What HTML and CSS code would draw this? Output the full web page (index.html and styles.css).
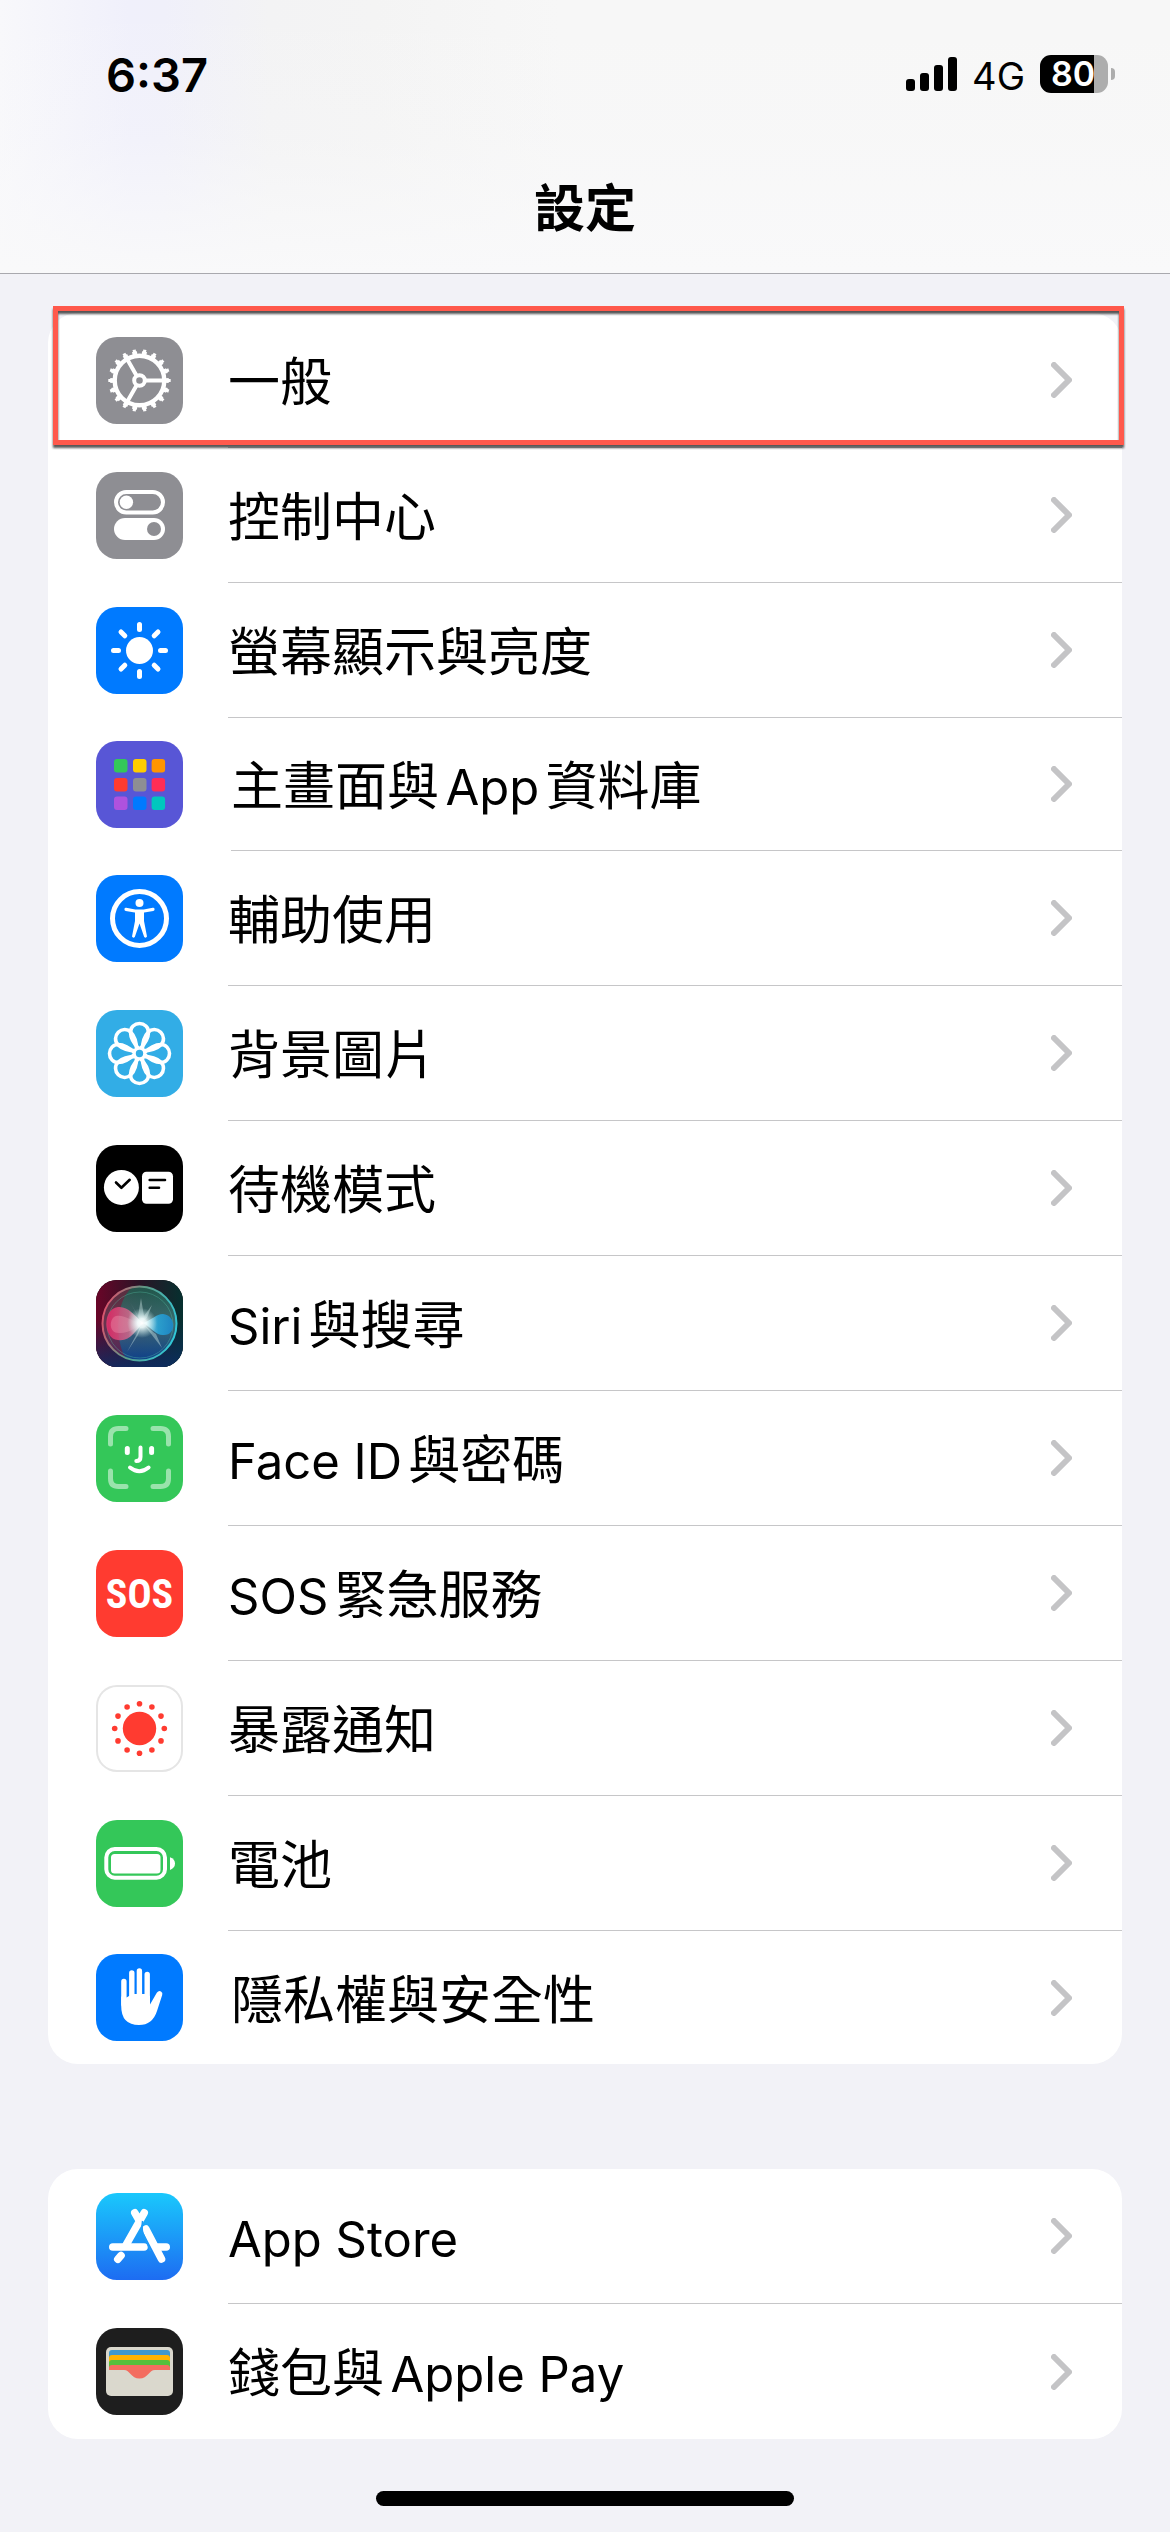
FILE: index.html
```html
<!DOCTYPE html>
<html lang="zh-Hant">

<head>
    <meta charset="UTF-8">
    <meta name="viewport" content="width=device-width, initial-scale=1">
    <title>設定</title>
    <link rel="stylesheet" href="styles.css">
</head>

<body>
    <!-- shared shapes -->
    <svg class="defs" width="0" height="0" aria-hidden="true">
        <symbol id="chevron" viewBox="0 0 21 36">
            <path d="M3 3L18 18L3 33" fill="none" stroke="#c4c4c6" stroke-width="6" stroke-linecap="round" stroke-linejoin="round"/>
        </symbol>
        <symbol id="petal" viewBox="-44 -44 88 88">
            <path d="M0 -4C-4 -8 -9 -15 -9 -21.5A9 8.5 0 0 1 9 -21.5C9 -15 4 -8 0 -4Z" fill="none" stroke="#fff" stroke-width="3.6"/>
        </symbol>
    </svg>

    <header class="top">
        <div class="status">
            <span class="time">6:37</span>
            <div class="status-right">
                <svg class="signal" viewBox="0 0 51 34" aria-hidden="true">
                    <rect x="0" y="22" width="9" height="12" rx="3"/>
                    <rect x="14" y="16" width="9" height="18" rx="3"/>
                    <rect x="28" y="8" width="9" height="26" rx="3"/>
                    <rect x="42" y="0" width="9" height="34" rx="3"/>
                </svg>
                <span class="network">4G</span>
                <div class="battery">
                    <span class="battery-level">80</span>
                </div>
            </div>
        </div>
        <h1>設定</h1>
    </header>

    <main>
        <ul class="card">
            <li>
                <a class="row" href="#general">
                    <svg class="icon gray" viewBox="0 0 87 87" aria-hidden="true">
                        <g fill="none" stroke="#fff">
                            <circle cx="43.5" cy="43.5" r="24.8" stroke-width="4.4"/>
                            <circle cx="43.5" cy="43.5" r="27.6" stroke-width="3.4" pathLength="180" stroke-dasharray="5 5" stroke-dashoffset="2.5"/>
                            <circle cx="43.5" cy="43.5" r="29.8" stroke-width="2.8" pathLength="180" stroke-dasharray="3 7" stroke-dashoffset="1.5"/>
                            <circle cx="43.5" cy="43.5" r="5.3" stroke-width="4"/>
                            <path d="M50 43.5H67M40.2 37.9L31.5 22.7M40.2 49.1L31.5 64.3" stroke-width="4"/>
                        </g>
                    </svg>
                    <div class="row-body"><span class="label">一般</span><svg class="chevron" aria-hidden="true"><use href="#chevron"/></svg></div>
                </a>
                <div class="highlight"></div>
            </li>
            <li>
                <a class="row" href="#control-center">
                    <svg class="icon gray" viewBox="0 0 87 87" aria-hidden="true">
                        <rect x="20" y="20" width="47" height="20.5" rx="10.2" fill="none" stroke="#fff" stroke-width="4"/>
                        <circle cx="30.4" cy="30.2" r="6.7" fill="#fff"/>
                        <rect x="18" y="46" width="51" height="22" rx="11" fill="#fff"/>
                        <circle cx="58" cy="57" r="7" fill="#8e8e93"/>
                    </svg>
                    <div class="row-body"><span class="label">控制中心</span><svg class="chevron" aria-hidden="true"><use href="#chevron"/></svg></div>
                </a>
            </li>
            <li>
                <a class="row" href="#display">
                    <svg class="icon blue" viewBox="0 0 87 87" aria-hidden="true">
                        <circle cx="43.5" cy="43.5" r="13.5" fill="#fff"/>
                        <path d="M43.5 17.5V22.5M43.5 64.5V69.5M17.5 43.5H22.5M64.5 43.5H69.5M25 25L28.8 28.8M58.2 58.2L62 62M25 62L28.8 58.2M58.2 28.8L62 25" stroke="#fff" stroke-width="5" stroke-linecap="round"/>
                    </svg>
                    <div class="row-body"><span class="label">螢幕顯示與亮度</span><svg class="chevron" aria-hidden="true"><use href="#chevron"/></svg></div>
                </a>
            </li>
            <li>
                <a class="row tight" href="#home-screen">
                    <svg class="icon indigo" viewBox="0 0 87 87" aria-hidden="true">
                        <rect x="18" y="18" width="13.5" height="13.5" rx="3" fill="#34c759"/>
                        <rect x="37" y="18" width="13.5" height="13.5" rx="3" fill="#ffcc00"/>
                        <rect x="55.6" y="18" width="13.5" height="13.5" rx="3" fill="#ff9500"/>
                        <rect x="18" y="37" width="13.5" height="13.5" rx="3" fill="#ff3b30"/>
                        <rect x="37" y="37" width="13.5" height="13.5" rx="3" fill="#8e8e93"/>
                        <rect x="55.6" y="37" width="13.5" height="13.5" rx="3" fill="#ff2d55"/>
                        <rect x="18" y="55.6" width="13.5" height="13.5" rx="3" fill="#af52de"/>
                        <rect x="37" y="55.6" width="13.5" height="13.5" rx="3" fill="#007aff"/>
                        <rect x="55.6" y="55.6" width="13.5" height="13.5" rx="3" fill="#00c7be"/>
                    </svg>
                    <div class="row-body"><span class="label">主畫面與<span class="latin">App</span>資料庫</span><svg class="chevron" aria-hidden="true"><use href="#chevron"/></svg></div>
                </a>
            </li>
            <li>
                <a class="row" href="#accessibility">
                    <svg class="icon blue" viewBox="0 0 87 87" aria-hidden="true">
                        <circle cx="43.5" cy="43.5" r="27" fill="none" stroke="#fff" stroke-width="5"/>
                        <circle cx="43.5" cy="28" r="4" fill="#fff"/>
                        <path d="M30 34.4L39 36H48L57 34.4" fill="none" stroke="#fff" stroke-width="3.2" stroke-linecap="round" stroke-linejoin="round"/>
                        <path d="M39 35H48V46L51 61.5Q50 63.5 48.2 62L43.5 48.5L38.8 62Q37 63.5 36 61.5L39 46Z" fill="#fff"/>
                    </svg>
                    <div class="row-body"><span class="label">輔助使用</span><svg class="chevron" aria-hidden="true"><use href="#chevron"/></svg></div>
                </a>
            </li>
            <li>
                <a class="row" href="#wallpaper">
                    <svg class="icon cyan" viewBox="-43.5 -43.5 87 87" aria-hidden="true">
                        <g>
                            <use href="#petal" x="-44" y="-44" width="88" height="88"/>
                            <use href="#petal" x="-44" y="-44" width="88" height="88" transform="rotate(45)"/>
                            <use href="#petal" x="-44" y="-44" width="88" height="88" transform="rotate(90)"/>
                            <use href="#petal" x="-44" y="-44" width="88" height="88" transform="rotate(135)"/>
                            <use href="#petal" x="-44" y="-44" width="88" height="88" transform="rotate(180)"/>
                            <use href="#petal" x="-44" y="-44" width="88" height="88" transform="rotate(225)"/>
                            <use href="#petal" x="-44" y="-44" width="88" height="88" transform="rotate(270)"/>
                            <use href="#petal" x="-44" y="-44" width="88" height="88" transform="rotate(315)"/>
                        </g>
                        <circle r="5.2" fill="#32ade6" stroke="#fff" stroke-width="3"/>
                    </svg>
                    <div class="row-body"><span class="label">背景圖片</span><svg class="chevron" aria-hidden="true"><use href="#chevron"/></svg></div>
                </a>
            </li>
            <li>
                <a class="row" href="#standby">
                    <svg class="icon black" viewBox="0 0 87 87" aria-hidden="true">
                        <circle cx="25.4" cy="42.4" r="17.5" fill="#fff"/>
                        <rect x="46" y="26.7" width="31" height="32" rx="4.5" fill="#fff"/>
                        <path d="M20 37.5L25.4 42.8L33.7 34.8M53.7 35H69M53.7 42.7H63" fill="none" stroke="#000" stroke-width="2.6" stroke-linecap="round" stroke-linejoin="round"/>
                    </svg>
                    <div class="row-body"><span class="label">待機模式</span><svg class="chevron" aria-hidden="true"><use href="#chevron"/></svg></div>
                </a>
            </li>
            <li>
                <a class="row" href="#siri">
                    <svg class="icon black" viewBox="0 0 87 87" aria-hidden="true">
                        <defs>
                            <linearGradient id="siriLeft" x1="0" y1="0" x2="1" y2="0">
                                <stop offset="0" stop-color="#6a0528"/>
                                <stop offset=".5" stop-color="#2a1426"/>
                                <stop offset="1" stop-color="#06302f"/>
                            </linearGradient>
                            <linearGradient id="siriFloor" x1="0" y1="0" x2="0" y2="1">
                                <stop offset=".45" stop-color="#0b2d5e" stop-opacity="0"/>
                                <stop offset="1" stop-color="#0b2d66" stop-opacity=".85"/>
                            </linearGradient>
                            <linearGradient id="siriRing" x1="0" y1=".3" x2="1" y2=".6">
                                <stop offset="0" stop-color="#e0506c"/>
                                <stop offset=".45" stop-color="#5c9a86"/>
                                <stop offset="1" stop-color="#30c8d8"/>
                            </linearGradient>
                            <linearGradient id="siriBall" x1="0" y1="0" x2="0" y2="1">
                                <stop offset="0" stop-color="#1f6a55"/>
                                <stop offset=".5" stop-color="#4b7f86"/>
                                <stop offset="1" stop-color="#0d4a9c"/>
                            </linearGradient>
                            <linearGradient id="siriPink" x1="0" y1="0" x2="1" y2="0">
                                <stop offset="0" stop-color="#f0286a"/>
                                <stop offset=".6" stop-color="#d8688c"/>
                                <stop offset="1" stop-color="#fff"/>
                            </linearGradient>
                            <linearGradient id="siriBlue" x1="0" y1="0" x2="1" y2="0">
                                <stop offset="0" stop-color="#d8fbff"/>
                                <stop offset=".5" stop-color="#28a8dc"/>
                                <stop offset="1" stop-color="#1a8ad0"/>
                            </linearGradient>
                            <radialGradient id="siriGlow">
                                <stop offset="0" stop-color="#fff"/>
                                <stop offset=".3" stop-color="#f4ffff" stop-opacity=".9"/>
                                <stop offset="1" stop-color="#bfeaea" stop-opacity="0"/>
                            </radialGradient>
                        </defs>
                        <rect width="87" height="87" fill="url(#siriLeft)"/>
                        <rect width="87" height="87" fill="url(#siriFloor)"/>
                        <circle cx="43.5" cy="43.5" r="37" fill="url(#siriBall)" opacity=".75"/>
                        <path d="M6.5 43.5A37 37 0 0 1 36 7.4C20 20 18 60 30 78A37 37 0 0 1 6.5 43.5Z" fill="#7a1538" opacity=".6"/>
                        <circle cx="43.5" cy="43.5" r="37" fill="none" stroke="url(#siriRing)" stroke-width="2"/>
                        <circle cx="44" cy="45" r="33" fill="none" stroke="#5ad0b0" stroke-width=".8" opacity=".4"/>
                        <path d="M47 43C38 35 32 26 22 27C6 29 7 59 22 60C34 62 40 50 47 43Z" fill="url(#siriPink)" opacity=".8"/>
                        <path d="M47 43C36 42 28 34 20 36C13 38 12 54 24 53C34 53 40 47 47 43Z" fill="#f4a0b8" opacity=".35"/>
                        <path d="M47 43C56 40 60 34 67 34C80 35 81 55 68 55C60 56 55 47 47 43Z" fill="url(#siriBlue)" opacity=".85"/>
                        <path d="M45 42L34 22L42 36L45 18L48 36L56 25L51 38ZM46 44L31 72L42 55ZM49 46L66 68L60 54Z" fill="#d8f0ee" opacity=".4"/>
                        <circle cx="46" cy="43" r="15" fill="url(#siriGlow)"/>
                    </svg>
                    <div class="row-body"><span class="label"><span class="latin">Siri</span>與搜尋</span><svg class="chevron" aria-hidden="true"><use href="#chevron"/></svg></div>
                </a>
            </li>
            <li>
                <a class="row" href="#face-id">
                    <svg class="icon green" viewBox="0 0 87 87" aria-hidden="true">
                        <g fill="none" stroke="#fff" stroke-linecap="round">
                            <path d="M14.5 29V21.5Q14.5 13.5 22.5 13.5H30M57 13.5H64.5Q72.5 13.5 72.5 21.5V29M72.5 56V63.5Q72.5 71.5 64.5 71.5H57M30 71.5H22.5Q14.5 71.5 14.5 63.5V56" stroke-width="5" stroke="#9ae3ac"/>
                            <path d="M31.3 33.5V37.5M55.6 33.5V37.5" stroke-width="5"/>
                            <path d="M44.5 32.5V42Q44.5 46 40.3 46" stroke-width="4"/>
                            <path d="M34 52.5Q43.3 60 52.6 52.5" stroke-width="4"/>
                        </g>
                    </svg>
                    <div class="row-body"><span class="label"><span class="latin">Face ID</span>與密碼</span><svg class="chevron" aria-hidden="true"><use href="#chevron"/></svg></div>
                </a>
            </li>
            <li>
                <a class="row" href="#sos">
                    <span class="icon red">SOS</span>
                    <div class="row-body"><span class="label"><span class="latin">SOS</span>緊急服務</span><svg class="chevron" aria-hidden="true"><use href="#chevron"/></svg></div>
                </a>
            </li>
            <li>
                <a class="row" href="#exposure">
                    <svg class="icon outlined" viewBox="-43.5 -43.5 87 87" aria-hidden="true">
                        <g fill="#ff3b30">
                            <circle r="16.7"/>
                            <circle cx="0" cy="-24.8" r="2.8"/>
                            <circle cx="12.4" cy="-21.5" r="2.8"/>
                            <circle cx="21.5" cy="-12.4" r="2.8"/>
                            <circle cx="24.8" cy="0" r="2.8"/>
                            <circle cx="21.5" cy="12.4" r="2.8"/>
                            <circle cx="12.4" cy="21.5" r="2.8"/>
                            <circle cx="0" cy="24.8" r="2.8"/>
                            <circle cx="-12.4" cy="21.5" r="2.8"/>
                            <circle cx="-21.5" cy="12.4" r="2.8"/>
                            <circle cx="-24.8" cy="0" r="2.8"/>
                            <circle cx="-21.5" cy="-12.4" r="2.8"/>
                            <circle cx="-12.4" cy="-21.5" r="2.8"/>
                        </g>
                    </svg>
                    <div class="row-body"><span class="label">暴露通知</span><svg class="chevron" aria-hidden="true"><use href="#chevron"/></svg></div>
                </a>
            </li>
            <li>
                <a class="row" href="#battery">
                    <svg class="icon green" viewBox="0 0 87 87" aria-hidden="true">
                        <rect x="10.3" y="29" width="58.7" height="28.7" rx="8.5" fill="none" stroke="#fff" stroke-width="4"/>
                        <rect x="15" y="34" width="49.5" height="19.5" rx="3.5" fill="#fff"/>
                        <path d="M74 37.3Q79 39 79 43.6Q79 48 74 50Z" fill="#fff"/>
                    </svg>
                    <div class="row-body"><span class="label">電池</span><svg class="chevron" aria-hidden="true"><use href="#chevron"/></svg></div>
                </a>
            </li>
            <li>
                <a class="row tight" href="#privacy">
                    <svg class="icon blue" viewBox="0 0 87 87" aria-hidden="true">
                        <path d="M27.9 27.5V50M35.8 19V48M43.4 17V48M51.2 20.5V50" stroke="#fff" stroke-width="5.4" stroke-linecap="round"/>
                        <path d="M25.2 42.5L30.6 43.5L33 42L38.4 40H49L54 42V50.5L60.8 38.8Q62.5 36.4 65 37.4Q67 38.6 66.2 41L61 57Q56.5 71 43 71Q25.2 71 25.2 52Z" fill="#fff"/>
                    </svg>
                    <div class="row-body"><span class="label">隱私權與安全性</span><svg class="chevron" aria-hidden="true"><use href="#chevron"/></svg></div>
                </a>
            </li>
        </ul>

        <ul class="card">
            <li>
                <a class="row" href="#app-store">
                    <svg class="icon store" viewBox="0 0 87 87" aria-hidden="true">
                        <g fill="none" stroke="#fff" stroke-width="7.6" stroke-linecap="round">
                            <path d="M48.2 19.8L30 52M38.8 19.8L43 27"/>
                            <path d="M16.8 54H48"/>
                            <path d="M62 54H70.2"/>
                            <path d="M49.8 36L65.5 66"/>
                            <path d="M25 62.6L21.8 66.2"/>
                        </g>
                        <path d="M46.6 28Q45 38 48.3 43.5L54.6 58" fill="none" stroke="#1f9bf8" stroke-width="1.6"/>
                    </svg>
                    <div class="row-body"><span class="label"><span class="latin">App Store</span></span><svg class="chevron" aria-hidden="true"><use href="#chevron"/></svg></div>
                </a>
            </li>
            <li>
                <a class="row" href="#wallet">
                    <svg class="icon wallet" viewBox="0 0 87 87" aria-hidden="true">
                        <rect x="10" y="19" width="67" height="49" rx="5" fill="#dad8cd"/>
                        <path d="M13 42V25Q13 22 16 22H71Q74 22 74 25V42Z" fill="#3f98cc"/>
                        <path d="M13 42V30Q13 27 16 27H71Q74 27 74 30V42Z" fill="#ffb301"/>
                        <path d="M13 42V35Q13 32 16 32H71Q74 32 74 35V42Z" fill="#55bf3c"/>
                        <path d="M13 42V40Q13 37 16 37H71Q74 37 74 40V42H59C53 42 52 50.5 43.5 50.5C35 50.5 34 42 28 42Z" fill="#f36d60"/>
                    </svg>
                    <div class="row-body"><span class="label">錢包與<span class="latin">Apple Pay</span></span><svg class="chevron" aria-hidden="true"><use href="#chevron"/></svg></div>
                </a>
            </li>
        </ul>
    </main>

    <div class="home-bar"></div>
</body>

</html>
```
FILE: styles.css
```css
* {
    box-sizing: border-box;
}

body {
    margin: 0;
    background-color: #f2f2f7;
    font-family: Inter, "Noto Sans CJK TC", sans-serif;
    color: #000;
}

.defs {
    position: absolute;
}

/* Status bar and title */
.top {
    border-bottom: 1px solid #a9a9ae;
    background: linear-gradient(to bottom, rgba(249, 249, 250, 0) 0%, rgba(249, 249, 250, 0.2) 50%, #f9f9fa 100%),
        linear-gradient(to right, #f8f8fb 0%, #f0f0fb 11%, #f0f0fa 14%, #f3f3f4 23%, #f4f4f4 32%, #f7f7f7 48%, #f7f7f7 100%);
}

.status {
    display: flex;
    justify-content: space-between;
    align-items: center;
    height: 148px;
    padding: 0 55px 0 106px;
}

.time {
    font-size: 47px;
    font-weight: 600;
}

.status-right {
    display: flex;
    align-items: center;
    gap: 15px;
}

.signal {
    width: 51px;
    height: 34px;
}

.network {
    font-size: 38px;
    line-height: 42px;
    padding-top: 4px;
}

.battery {
    display: flex;
    align-items: center;
    gap: 3px;
}

.battery::after {
    content: "";
    width: 4px;
    height: 12px;
    border-radius: 0 4px 4px 0;
    background-color: #adadad;
}

.battery-level {
    width: 68px;
    height: 38px;
    padding-left: 11px;
    border-radius: 11px;
    background: linear-gradient(to right, #000 54px, #adadad 54px);
    color: #fff;
    font-size: 34px;
    font-weight: 600;
    line-height: 38px;
}

h1 {
    margin: 0;
    padding: 3px 0 6px;
    font-size: 51px;
    font-weight: 600;
    line-height: 116px;
    text-align: center;
}

/* Setting groups */
main {
    display: flex;
    flex-direction: column;
    gap: 105px;
    padding: 39px 48px 0;
}

.card {
    margin: 0;
    padding: 0;
    list-style: none;
    background-color: #fff;
    border-radius: 30px;
}

.card li {
    position: relative;
}

.row {
    display: flex;
    gap: 45px;
    padding-left: 48px;
    color: inherit;
    text-decoration: none;
}

.icon {
    flex: none;
    width: 87px;
    height: 87px;
    margin: 24px 0;
    border-radius: 21px;
}

.row-body {
    flex: 1;
    display: flex;
    align-items: center;
    justify-content: space-between;
    padding-right: 50px;
    border-bottom: 1px solid #c6c6c8;
}

.card li:last-child .row-body {
    border-bottom: none;
}

.tight {
    gap: 48px;
}

.tight .icon {
    margin: 23px 0;
}

.label {
    padding-top: 6px;
    font-size: 52px;
    line-height: 60px;
    text-autospace: normal;
}

.latin {
    font-size: 49px;
}

.chevron {
    width: 21px;
    height: 36px;
}

/* Red frame around the first row */
.highlight {
    position: absolute;
    top: -7px;
    bottom: 3px;
    left: 5px;
    right: -2px;
    border: 5px solid #ff594c;
    filter: drop-shadow(0 3px 1px rgba(0, 0, 0, 0.65));
    pointer-events: none;
}

.gray {
    background-color: #8e8e93;
}

.blue {
    background-color: #007aff;
}

.indigo {
    background-color: #5856d6;
}

.cyan {
    background-color: #32ade6;
}

.black {
    background-color: #000;
}

.green {
    background-color: #34c759;
}

.red {
    background-color: #ff3b30;
    color: #fff;
    font-family: "Liberation Sans Narrow", "Roboto Condensed", "Open Sans Condensed", Roboto, sans-serif;
    font-size: 40px;
    font-weight: 700;
    line-height: 89px;
    text-align: center;
}

.outlined {
    box-shadow: inset 0 0 0 2px #e5e5e5;
}

.store {
    background: linear-gradient(to bottom, #1ac8fc, #1d6cf2);
}

.wallet {
    background-color: #1e1e1e;
}

.home-bar {
    width: 418px;
    height: 15px;
    margin: 52px auto 26px;
    border-radius: 8px;
    background-color: #000;
}
```
